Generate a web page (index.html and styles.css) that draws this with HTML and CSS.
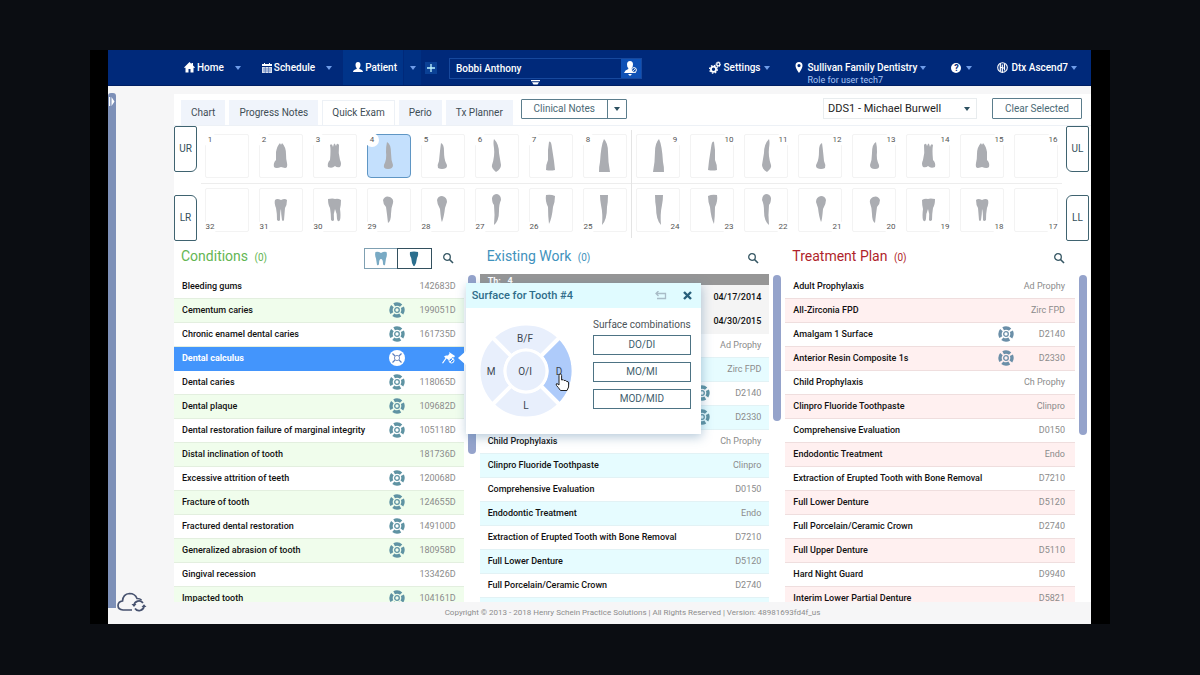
FILE: index.html
```html
<!DOCTYPE html>
<html lang="en">
<head>
<meta charset="utf-8">
<title>Quick Exam - Bobbi Anthony</title>
<link rel="stylesheet" href="styles.css">
</head>
<body>
<svg class="defs" aria-hidden="true">
  <symbol id="surf" viewBox="0 0 16 16"><circle cx="8" cy="8" r="6" fill="none" stroke="currentColor" stroke-width="3.4" stroke-dasharray="7.4 2.025" stroke-dashoffset="3.7"/><circle cx="8" cy="8" r="2.300" fill="none" stroke="currentColor" stroke-width="1.300"/></symbol>
  <symbol id="search" viewBox="0 0 12 12"><circle cx="5" cy="5" r="3.3" fill="none" stroke="currentColor" stroke-width="1.3"/><path d="M7.5 7.5L11 11" stroke="currentColor" stroke-width="1.6"/></symbol>
  <symbol id="u2" viewBox="0 0 44 44"><path d="M15 33Q14 29 17 26L17 18Q18 12 21 9Q22 12 23 9Q27 13 27 20Q27 26 28 29Q29 34 26 34L22 33Q17 35 15 33Z"/></symbol>
  <symbol id="u3" viewBox="0 0 44 44"><path d="M15 33Q14 29 17 26Q18 16 17 11Q19 9 20 13Q21 8 22 10L23 12Q24 8 26 11Q25 19 27 26Q29 30 27 33Q24 34 22 32Q19 35 15 33Z"/></symbol>
  <symbol id="u4" viewBox="0 0 44 44"><path d="M20 8Q24 10 24 19Q24 26 26 31Q26 35 21 35Q16 35 17 31Q20 25 19 18Q19 12 20 8Z"/></symbol>
  <symbol id="u5" viewBox="0 0 44 44"><path d="M20 9Q23 10 23 17Q23 25 25 29Q27 32 25 34Q21 36 17 34Q16 31 18 27Q19 16 20 9Z"/></symbol>
  <symbol id="u6" viewBox="0 0 44 44"><path d="M19 5Q24 10 24 19L26 31Q26 35 21 38Q16 34 17 31Q20 22 19 14Q18 8 19 5Z"/></symbol>
  <symbol id="u7" viewBox="0 0 44 44"><path d="M20 8Q22 6 23 14L25 27L26 36Q21 37 17 36Q17 30 19 26L19 16Z"/></symbol>
  <symbol id="u8" viewBox="0 0 44 44"><path d="M21 5Q25 9 25 18Q25 27 27 38H16Q16 32 17 28Q18 11 21 5Z"/></symbol>
  <symbol id="l31" viewBox="0 0 44 44"><path d="M16 12Q18 10 22 12Q26 10 28 12Q28 17 26 20L25 32Q24 34 23 32Q22 26 22 21Q21 23 21 32Q20 34 18 32Q18 25 17 20Q15 15 16 12Z"/></symbol>
  <symbol id="l30" viewBox="0 0 44 44"><path d="M15 11Q20 10 22 11Q25 10 28 12Q28 17 27 21Q28 28 27 32Q25 35 24 31Q24 25 22 21Q20 26 21 32Q20 34 18 32Q18 26 17 20Q15 17 15 11Z"/></symbol>
  <symbol id="l29" viewBox="0 0 44 44"><path d="M16 12Q18 7 23 9Q27 11 26 15Q24 20 24 26Q24 33 21 35Q20 26 19 19Q16 16 16 12Z"/></symbol>
  <symbol id="l28" viewBox="0 0 44 44"><path d="M16 12Q17 8 21 8Q26 9 26 14L24 20Q23 29 21 34Q20 33 19 21Q16 16 16 12Z"/></symbol>
  <symbol id="l27" viewBox="0 0 44 44"><path d="M17 10Q18 6 22 6Q26 7 26 12Q24 16 24 23Q24 33 19 37Q20 26 19 17Q17 15 17 10Z"/></symbol>
  <symbol id="l26" viewBox="0 0 44 44"><path d="M17 7Q22 6 26 8Q26 14 24 19Q23 30 20 36Q19 28 19 19Q16 13 17 7Z"/></symbol>
  <symbol id="l25" viewBox="0 0 44 44"><path d="M17 7H25Q25 14 24 19Q24 32 19 37Q20 26 18 17Q17 12 17 7Z"/></symbol>
</svg>

<div class="app">
  <header class="topbar">
    <nav class="menu">
      <a class="item home" href="#"><svg width="11" height="11" viewBox="0 0 11 11"><path fill="currentColor" d="M5.500 0L7.500 2V1H9V3.500L11 5.500L10 6L9.500 5.500V10.500H6.500V7H4.500V10.500H1.500V5.500L1 6L0 5.500Z"/></svg>Home<i class="caret"></i></a>
      <a class="item schedule" href="#"><svg width="10" height="10" viewBox="0 0 10 10"><path fill="currentColor" d="M0 1H2V0H3V1H7V0H8V1H10V3H0Z"/><path fill="currentColor" opacity=".85" d="M0 4H10V10H0Z"/><path stroke="#4a70b5" stroke-width=".7" d="M1 6H9M1 8H9M3.300 4V10M6.600 4V10"/></svg>Schedule<i class="caret"></i></a>
      <a class="item patient" href="#"><svg width="10" height="11" viewBox="0 0 10 11"><path fill="currentColor" d="M5 0Q7.500 0 7.500 3Q7.500 5 6.300 6.200V7Q10 8 10 10H0Q0 8 3.700 7V6.200Q2.500 5 2.500 3Q2.500 0 5 0Z"/></svg>Patient</a>
      <button class="patient-more" aria-label="Patient menu"><i class="caret"></i></button>
      <button class="add" aria-label="Add"><svg width="8" height="8" viewBox="0 0 8 8"><path d="M4 0V8M0 4H8" stroke="currentColor" stroke-width="1.300"/></svg></button>
    </nav>
    <form class="finder">
      <input type="text" value="Bobbi Anthony" aria-label="Patient name">
      <button type="button" aria-label="Find patient"><svg width="16" height="17" viewBox="0 0 16 17"><path fill="currentColor" d="M7 1Q10 1 10 4.500Q10 7 8.700 8V9Q12 10 13 13H1Q2 10 5.300 9V8Q4 7 4 4.500Q4 1 7 1ZM5 14H9L7 16Z"/><circle cx="11" cy="10" r="2.400" fill="#0b4aa8" stroke="currentColor"/><path d="M9.500 11.500L12.500 8.500" stroke="currentColor" stroke-width=".8"/></svg></button>
      <svg class="handle" width="9" height="5" viewBox="0 0 9 5"><path fill="#fff" d="M0 0H9V1.200H0ZM1 2.200H8L6.500 4.500H2.500Z"/></svg>
    </form>
    <nav class="menu tools">
      <a class="item settings" href="#"><svg width="12" height="13" viewBox="0 0 12 13"><circle cx="4.500" cy="8.300" r="2.600" fill="none" stroke="currentColor" stroke-width="1.800"/><circle cx="4.500" cy="8.300" r="3.900" fill="none" stroke="currentColor" stroke-width="1.300" stroke-dasharray="1.500 1.560"/><circle cx="9.300" cy="3.300" r="1.600" fill="none" stroke="currentColor" stroke-width="1.200"/><circle cx="9.300" cy="3.300" r="2.400" fill="none" stroke="currentColor" stroke-dasharray="1 .9"/></svg>Settings<i class="caret"></i></a>
      <a class="item office" href="#"><svg width="8" height="11" viewBox="0 0 8 11"><path fill="currentColor" fill-rule="evenodd" d="M4 0Q7.500 0 7.500 3.700Q7.500 6 4 11Q.5 6 .5 3.700Q.5 0 4 0ZM4 2A1.600 1.600 0 1 0 4 5.200A1.600 1.600 0 1 0 4 2Z"/></svg><span>Sullivan Family Dentistry<small>Role for user tech7</small></span><i class="caret"></i></a>
      <a class="item help" href="#" aria-label="Help"><b class="round">?</b><i class="caret"></i></a>
      <a class="item user" href="#"><svg width="11" height="11" viewBox="0 0 11 11"><circle cx="5.500" cy="5.500" r="4.800" fill="none" stroke="currentColor" stroke-width="1.100"/><path d="M3.300 1V9.500M5.300 2.500V11M7.500 1.500V8.500M3 5.500H5.500M5.500 6H8" fill="none" stroke="currentColor" stroke-width="1.200"/></svg>Dtx Ascend7<i class="caret"></i></a>
    </nav>
  </header>

  <div class="workspace">
    <aside class="rail">
      <button class="rail-bar" aria-label="Expand side panel"><svg width="6" height="9" viewBox="0 0 6 9"><path fill="#fff" d="M0 0H1.200V9H0ZM2.500 0L5.500 4.500L2.500 9Z"/></svg></button>
      <svg class="cloud" width="30" height="20" viewBox="0 0 30 20" fill="none" stroke="#47526f" stroke-width="1.700"><path d="M15 18H6Q1 17.500 1 13.500Q1.200 9.500 5.500 9Q6 2 12.500 1.500Q18 1.500 20 6.500Q23 6.500 24.500 8"/><path d="M17 13.500A5 5 0 0 1 26 11M27 14.500A5 5 0 0 1 18 16.500"/><path d="M14.500 12L17 15L19.500 12ZM24.500 15L27 12.200L29.500 15Z" fill="#47526f" stroke="none"/></svg>
    </aside>

    <div class="content">
      <main class="board">
        <div class="toolbar">
          <div class="tabs" role="tablist">
            <button class="tab" role="tab">Chart</button>
            <button class="tab" role="tab">Progress Notes</button>
            <button class="tab active" role="tab" aria-selected="true">Quick Exam</button>
            <button class="tab" role="tab">Perio</button>
            <button class="tab" role="tab">Tx Planner</button>
          </div>
          <div class="split"><button>Clinical Notes</button><button aria-label="More notes"><i class="caret dark"></i></button></div>
          <div class="provider"><select aria-label="Provider"><option>DDS1 - Michael Burwell</option></select><i class="caret dark"></i></div>
          <button class="clear">Clear Selected</button>
        </div>

        <section class="chart" aria-label="Teeth">
          <div class="side left"><button>UR</button><button>LR</button></div>
          <div class="arch right-half">
            <div class="teeth upper">
              <button class="tooth"><span>1</span></button>
              <button class="tooth"><svg><use href="#u2"/></svg><span>2</span></button>
              <button class="tooth"><svg><use href="#u3"/></svg><span>3</span></button>
              <button class="tooth on"><svg><use href="#u4"/></svg><span>4</span></button>
              <button class="tooth"><svg><use href="#u5"/></svg><span>5</span></button>
              <button class="tooth"><svg><use href="#u6"/></svg><span>6</span></button>
              <button class="tooth"><svg><use href="#u7"/></svg><span>7</span></button>
              <button class="tooth"><svg><use href="#u8"/></svg><span>8</span></button>
            </div>
            <div class="teeth lower">
              <button class="tooth"><span>32</span></button>
              <button class="tooth"><svg><use href="#l31"/></svg><span>31</span></button>
              <button class="tooth"><svg><use href="#l30"/></svg><span>30</span></button>
              <button class="tooth"><svg><use href="#l29"/></svg><span>29</span></button>
              <button class="tooth"><svg><use href="#l28"/></svg><span>28</span></button>
              <button class="tooth"><svg><use href="#l27"/></svg><span>27</span></button>
              <button class="tooth"><svg><use href="#l26"/></svg><span>26</span></button>
              <button class="tooth"><svg><use href="#l25"/></svg><span>25</span></button>
            </div>
          </div>
          <div class="arch left-half">
            <div class="teeth upper">
              <button class="tooth"><svg><use href="#u8"/></svg><span>9</span></button>
              <button class="tooth"><svg><use href="#u7"/></svg><span>10</span></button>
              <button class="tooth"><svg><use href="#u6"/></svg><span>11</span></button>
              <button class="tooth"><svg><use href="#u5"/></svg><span>12</span></button>
              <button class="tooth"><svg><use href="#u4"/></svg><span>13</span></button>
              <button class="tooth"><svg><use href="#u3"/></svg><span>14</span></button>
              <button class="tooth"><svg><use href="#u2"/></svg><span>15</span></button>
              <button class="tooth"><span>16</span></button>
            </div>
            <div class="teeth lower">
              <button class="tooth"><svg><use href="#l25"/></svg><span>24</span></button>
              <button class="tooth"><svg><use href="#l26"/></svg><span>23</span></button>
              <button class="tooth"><svg><use href="#l27"/></svg><span>22</span></button>
              <button class="tooth"><svg><use href="#l28"/></svg><span>21</span></button>
              <button class="tooth"><svg><use href="#l29"/></svg><span>20</span></button>
              <button class="tooth"><svg><use href="#l30"/></svg><span>19</span></button>
              <button class="tooth"><svg><use href="#l31"/></svg><span>18</span></button>
              <button class="tooth"><span>17</span></button>
            </div>
          </div>
          <div class="side right"><button>UL</button><button>LL</button></div>
        </section>

        <div class="panels">
          <section class="panel conditions">
            <header class="panel-head">
              <h2>Conditions <small>(0)</small></h2>
              <div class="toggle">
                <button aria-label="Whole mouth"><svg width="14" height="15" viewBox="0 0 14 15"><path fill="#79aac4" d="M1.500 1Q4 0 7 2Q10 0 12.500 1Q13.500 4 12 7.500L11 14Q9.500 15 9 13Q9 8 7 8Q5 8 5 13Q4.500 15 3 14L2 7.500Q.5 4 1.500 1Z"/></svg></button>
                <button aria-label="Single tooth"><svg width="10" height="15" viewBox="0 0 10 15"><path fill="#2c6f8e" d="M1 1Q5 0 9 1Q9.500 5 8 7Q7.500 12 5.500 15H4.500Q2.500 12 2.200 7Q.5 5 1 1Z"/></svg></button>
              </div>
              <button class="find" aria-label="Search conditions"><svg width="12" height="12"><use href="#search"/></svg></button>
            </header>
            <div class="list">
              <table>
                <tr><td>Bleeding gums</td><td></td><td>142683D</td></tr>
                <tr><td>Cementum caries</td><td><svg><use href="#surf"/></svg></td><td>199051D</td></tr>
                <tr><td>Chronic enamel dental caries</td><td><svg><use href="#surf"/></svg></td><td>161735D</td></tr>
                <tr class="selected"><td>Dental calculus</td><td><svg viewBox="0 0 16 16"><circle cx="8" cy="8" r="8" fill="#fff"/><circle cx="8" cy="8" r="2.600" fill="none" stroke="#7d94c4"/><path d="M3.500 3.500L6 6M12.500 3.500L10 6M3.500 12.500L6 10M12.500 12.500L10 10" stroke="#5b7fc0" stroke-width="1.200"/></svg></td><td><svg class="pin" viewBox="0 0 14 14"><path fill="#fff" d="M7 1L13 5L12 6.500L10.500 6L9 8L8 10L4.500 7.500L1 12.500L0 12L3.500 7L2 5.500L4 4.500L6 4.500L7.500 2.500Z"/><circle cx="9.500" cy="9.500" r="2.500" fill="#4395fc" stroke="#fff"/><path d="M8 11L11 8" stroke="#fff"/></svg></td></tr>
                <tr><td>Dental caries</td><td><svg><use href="#surf"/></svg></td><td>118065D</td></tr>
                <tr><td>Dental plaque</td><td><svg><use href="#surf"/></svg></td><td>109682D</td></tr>
                <tr><td>Dental restoration failure of marginal integrity</td><td><svg><use href="#surf"/></svg></td><td>105118D</td></tr>
                <tr><td>Distal inclination of tooth</td><td></td><td>181736D</td></tr>
                <tr><td>Excessive attrition of teeth</td><td><svg><use href="#surf"/></svg></td><td>120068D</td></tr>
                <tr><td>Fracture of tooth</td><td><svg><use href="#surf"/></svg></td><td>124655D</td></tr>
                <tr><td>Fractured dental restoration</td><td><svg><use href="#surf"/></svg></td><td>149100D</td></tr>
                <tr><td>Generalized abrasion of tooth</td><td><svg><use href="#surf"/></svg></td><td>180958D</td></tr>
                <tr><td>Gingival recession</td><td></td><td>133426D</td></tr>
                <tr><td>Impacted tooth</td><td><svg><use href="#surf"/></svg></td><td>104161D</td></tr>
              </table>
            </div>
            <div class="track"><i class="thumb tall"></i></div>
          </section>

          <section class="panel work">
            <header class="panel-head">
              <h2>Existing Work <small>(0)</small></h2>
              <button class="find" aria-label="Search existing work"><svg width="12" height="12"><use href="#search"/></svg></button>
            </header>
            <div class="list">
              <div class="group">Th: &nbsp; 4</div>
              <table>
                <tr class="dated"><td></td><td></td><td>04/17/2014</td></tr>
                <tr class="dated"><td></td><td></td><td>04/30/2015</td></tr>
                <tr><td></td><td></td><td>Ad Prophy</td></tr>
                <tr><td></td><td></td><td>Zirc FPD</td></tr>
                <tr><td></td><td><svg><use href="#surf"/></svg></td><td>D2140</td></tr>
                <tr><td></td><td><svg><use href="#surf"/></svg></td><td>D2330</td></tr>
                <tr><td>Child Prophylaxis</td><td></td><td>Ch Prophy</td></tr>
                <tr><td>Clinpro Fluoride Toothpaste</td><td></td><td>Clinpro</td></tr>
                <tr><td>Comprehensive Evaluation</td><td></td><td>D0150</td></tr>
                <tr><td>Endodontic Treatment</td><td></td><td>Endo</td></tr>
                <tr><td>Extraction of Erupted Tooth with Bone Removal</td><td></td><td>D7210</td></tr>
                <tr><td>Full Lower Denture</td><td></td><td>D5120</td></tr>
                <tr><td>Full Porcelain/Ceramic Crown</td><td></td><td>D2740</td></tr>
                <tr><td></td><td></td><td></td></tr>
              </table>
            </div>
            <div class="track"><i class="thumb short"></i></div>

            <div class="popup" role="dialog" aria-label="Surface for Tooth #4">
              <header>
                <h3>Surface for Tooth #4</h3>
                <button aria-label="Undo"><svg width="12" height="9" viewBox="0 0 12 9"><path d="M1 2.500H10.500V7.500H2M3.500 0L1 2.500L3.500 5" fill="none" stroke="#a9bcc7" stroke-width="1.300"/></svg></button>
                <button aria-label="Close"><svg width="9" height="9" viewBox="0 0 9 9"><path d="M1 1L8 8M8 1L1 8" stroke="#285f7b" stroke-width="2.400"/></svg></button>
              </header>
              <div class="popup-body">
                <svg class="wheel" width="92" height="92" viewBox="0 0 92 92">
                  <circle cx="46" cy="46" r="34" fill="none" stroke="#e8effc" stroke-width="23"/>
                  <path d="M62 30L78.200 13.800A45.500 45.500 0 0 1 78.200 78.200L62 62A22.500 22.500 0 0 0 62 30Z" fill="#aecbfa"/>
                  <path d="M10 10L82 82M82 10L10 82" stroke="#fff" stroke-width="4"/>
                  <circle cx="46" cy="46" r="22.500" fill="#fff"/>
                  <circle cx="46" cy="46" r="19.500" fill="#e8effc"/>
                  <text x="45" y="17">B/F</text><text x="11" y="50">M</text><text x="45" y="50">O/I</text><text x="79" y="50">D</text><text x="46" y="84">L</text>
                  <path d="M79 60V50.500Q79.100 49 80.300 49Q81.500 49 81.600 50.500V55Q83.500 54 84 55.500Q86 55 86.300 56.300Q88.500 56 88.600 58V62L87 65.500H80.500Q78 62 76.500 60.500Q75.500 58.500 77 58.500Z" fill="#fff" stroke="#222" stroke-width="1"/>
                </svg>
                <div class="combos">
                  <p>Surface combinations</p>
                  <button>DO/DI</button>
                  <button>MO/MI</button>
                  <button>MOD/MID</button>
                </div>
              </div>
            </div>
          </section>

          <section class="panel plan">
            <header class="panel-head">
              <h2>Treatment Plan <small>(0)</small></h2>
              <button class="find" aria-label="Search treatment plan"><svg width="12" height="12"><use href="#search"/></svg></button>
            </header>
            <div class="list">
              <table>
                <tr><td>Adult Prophylaxis</td><td></td><td>Ad Prophy</td></tr>
                <tr><td>All-Zirconia FPD</td><td></td><td>Zirc FPD</td></tr>
                <tr><td>Amalgam 1 Surface</td><td><svg><use href="#surf"/></svg></td><td>D2140</td></tr>
                <tr><td>Anterior Resin Composite 1s</td><td><svg><use href="#surf"/></svg></td><td>D2330</td></tr>
                <tr><td>Child Prophylaxis</td><td></td><td>Ch Prophy</td></tr>
                <tr><td>Clinpro Fluoride Toothpaste</td><td></td><td>Clinpro</td></tr>
                <tr><td>Comprehensive Evaluation</td><td></td><td>D0150</td></tr>
                <tr><td>Endodontic Treatment</td><td></td><td>Endo</td></tr>
                <tr><td>Extraction of Erupted Tooth with Bone Removal</td><td></td><td>D7210</td></tr>
                <tr><td>Full Lower Denture</td><td></td><td>D5120</td></tr>
                <tr><td>Full Porcelain/Ceramic Crown</td><td></td><td>D2740</td></tr>
                <tr><td>Full Upper Denture</td><td></td><td>D5110</td></tr>
                <tr><td>Hard Night Guard</td><td></td><td>D9940</td></tr>
                <tr><td>Interim Lower Partial Denture</td><td></td><td>D5821</td></tr>
              </table>
            </div>
            <div class="track"><i class="thumb mid"></i></div>
          </section>
        </div>
      </main>
      <footer class="legal">Copyright © 2013 - 2018 Henry Schein Practice Solutions | All Rights Reserved | Version: 48981693fd4f_us</footer>
    </div>
  </div>
</div>
</body>
</html>
```
FILE: styles.css
```css
* { box-sizing: border-box; }

body {
  margin: 0;
  height: 100vh;
  padding: 50px 90px 51px;
  display: flex;
  background: #0b0d12;
  font: 10px/12px Roboto, "Liberation Sans", sans-serif;
  color: #111;
}

button, input, select { font: inherit; color: inherit; margin: 0; padding: 0; border: 0; background: none; }
button { display: flex; align-items: center; justify-content: center; }
a { color: inherit; text-decoration: none; }
h2, h3, p { margin: 0; }
.defs { position: absolute; width: 0; height: 0; }

.app {
  flex: 1;
  min-width: 0;
  display: flex;
  flex-direction: column;
  border: solid #000;
  border-width: 0 19px 0 18px;
  background: #f6f6f7;
}

/* top bar */
.topbar {
  height: 36px;
  display: flex;
  align-items: stretch;
  background: #00297a;
  border-bottom: 1px solid #001f63;
  color: #fff;
  font-weight: 500;
  padding: 0 14px 0 76px;
}
.menu { display: flex; align-items: stretch; }
.item { display: flex; align-items: center; gap: 2px; white-space: nowrap; }
.caret {
  width: 0;
  height: 0;
  border: 3px solid transparent;
  border-top: 4px solid #6f9ce8;
  border-bottom: 0;
}
.caret.dark { border-top-color: #2d5060; }
.home .caret, .schedule .caret { margin-left: 9px; }
.schedule { margin-left: 21px; }
.patient { margin-left: 11px; padding: 0 6px 0 10px; background: #003489; }
.patient-more { width: 17px; margin-left: 1px; background: #003083; }
.add { align-self: center; width: 12px; height: 12px; margin-left: 4px; background: #0b4196; color: #bff5ff; }
.finder {
  position: relative;
  display: flex;
  align-self: center;
  width: 193px;
  height: 21px;
  margin: 2px 0 0 12px;
  border: 1px solid #17489d;
}
.finder input { flex: 1; min-width: 0; padding-left: 6px; }
.finder button { width: 20px; background: #0f51b5; }
.handle { position: absolute; left: 81px; top: 21px; }
.tools { flex: 1; justify-content: flex-end; gap: 25px; }
.tools .item { gap: 3px; }
.office svg { margin-right: 2px; }
.office span { position: relative; }
.office small {
  position: absolute;
  left: 0;
  top: 12px;
  font-size: 9px;
  font-weight: 400;
  color: #a9c6f5;
}
.round {
  width: 10px;
  height: 10px;
  margin-right: 2px;
  border-radius: 50%;
  background: #fff;
  color: #00297a;
  font-size: 9px;
  line-height: 10px;
  text-align: center;
}

/* frame */
.workspace { flex: 1; min-height: 0; display: flex; }
.rail { width: 66px; display: flex; align-items: flex-end; padding-top: 7px; }
.rail-bar {
  width: 8px;
  align-self: stretch;
  align-items: flex-start;
  margin-bottom: 16px;
  padding-top: 4px;
  background: #7d90b8;
  border-radius: 3px 3px 0 0;
}
.cloud { margin: 0 0 12px 1px; }
.content { flex: 1; min-width: 0; display: flex; flex-direction: column; padding-top: 8px; }
.board { flex: 1; min-height: 0; display: flex; flex-direction: column; background: #fff; }
.legal { height: 22px; line-height: 22px; font-size: 8px; text-align: center; color: #8c8c8c; }

/* toolbar */
.toolbar {
  display: flex;
  align-items: flex-start;
  padding: 4px 9px 0 7px;
  border-bottom: 1px solid #edf1f6;
  color: #3f4e56;
}
.tabs { display: flex; gap: 4px; margin-top: 2px; }
.tab { height: 25px; padding: 0 10px; background: #f0f4fb; }
.tab.active { background: #fff; border: 1px solid #edf1f6; border-bottom: 0; padding: 0 9px; }
.split { display: flex; margin: 1px 0 0 8px; border: 1px solid #5b7d8c; border-radius: 1px; height: 20px; color: #4b6a76; }
.split button:first-child { width: 86px; border-right: 1px solid #5b7d8c; }
.split button:last-child { width: 18px; }
.provider { margin-left: auto; width: 154px; height: 21px; border: 1px solid #e8ecee; display: flex; align-items: center; padding-right: 6px; }
.provider select { flex: 1; appearance: none; padding-left: 4px; color: #222; font-size: 11px; }
.clear { margin-left: 15px; width: 90px; height: 21px; border: 1px solid #5b7d8c; border-radius: 1px; color: #4b6a76; }

/* tooth chart */
.chart { display: flex; padding-right: 2px; }
.side { width: 23px; display: flex; flex-direction: column; justify-content: space-between; }
.side button { height: 46px; border: 1px solid #3f6370; color: #34505c; }
.side.left button { border-radius: 2px 2px 6px 2px; }
.side.left button + button { border-radius: 2px 6px 2px 2px; }
.side.right button { border-radius: 2px 2px 2px 6px; }
.side.right button + button { border-radius: 6px 2px 2px 2px; }
.arch { flex: 1; margin: 4px 0 3px; }
.right-half { padding-left: 4px; border-right: 1px solid #e4e4e4; }
.left-half { padding-right: 4px; }
.teeth { display: grid; grid-template-columns: repeat(8, minmax(0, 1fr)); gap: 10px; padding: 4px; }
.upper { padding-bottom: 5px; border-bottom: 1px solid #ededed; }
.lower { padding-bottom: 6px; }
.tooth { position: relative; height: 44px; border: 1px solid #f3f3f3; border-radius: 2px; }
.tooth svg { width: 44px; height: 44px; flex: none; fill: #abadb2; }
.left-half .tooth svg { transform: scaleX(-1); }
.tooth.on { background: #c4e0fd; border-color: #5f96c4; border-radius: 4px; }
.tooth span {
  position: absolute;
  width: 14px;
  height: 14px;
  left: -3px;
  top: -2px;
  border-radius: 50%;
  background: #fff;
  font-size: 8px;
  line-height: 14px;
  text-align: center;
  color: #555;
}
.lower .tooth span { top: auto; bottom: -3px; }
.left-half .tooth span { left: auto; right: -3px; }

/* lists */
.panels { flex: 1; min-height: 0; display: grid; grid-template-columns: repeat(3, 1fr); grid-template-rows: 100%; }
.panel {
  position: relative;
  min-height: 0;
  display: grid;
  grid-template-columns: 1fr 8px;
  grid-template-rows: 33px 1fr;
  column-gap: 4px;
  padding-right: 4px;
}
.panel-head { display: flex; align-items: center; padding: 0 10px 2px 7px; }
.panel-head h2 { flex: 1; font-size: 14px; line-height: 18px; font-weight: 400; }
.panel-head small { font-size: 10px; margin-left: 3px; }
.conditions h2 { color: #63b652; }
.work h2 { color: #3f92bd; }
.plan h2 { color: #b01f2b; }
.find { color: #355663; margin-top: 3px; }
.toggle { display: flex; width: 68px; height: 21px; margin: 3px 10px 0 0; border: 1px solid #7fa0b2; }
.toggle button { flex: 1; }
.toggle button + button { outline: 1px solid #33505e; }
.list { grid-column: 1; grid-row: 2; min-height: 0; overflow: hidden; font-size: 9px; line-height: 10px; }
.track { grid-column: 2; grid-row: 2; padding-top: 1px; }
.thumb { display: block; border-radius: 4px; background: #95a3cb; }
.tall { height: 179px; }
.short { height: 146px; }
.mid { height: 160px; }

table { width: 100%; border-collapse: collapse; table-layout: fixed; }
tr { height: 24px; }
td { padding: 0; border-bottom: 1px solid #ececec; white-space: nowrap; font-weight: 500; }
td:first-child { padding-left: 8px; }
td:nth-child(2) { width: 16px; }
td:last-child { width: 59px; padding-right: 8px; text-align: right; color: #8b8b8b; font-weight: 400; }
td svg { display: block; width: 16px; height: 16px; color: #5f93a3; }
.plan td svg { color: #6b8fa8; }
.plan td:last-child { width: 61px; padding-right: 10px; }
.conditions tr:nth-child(even) { background: #f0fdec; }
.conditions td { border-color: #e3efdf; }
.work tr:nth-child(even) { background: #e6fcff; }
.work td { border-color: #e2f2f5; }
.plan tr:nth-child(even) { background: #fff0f0; }
.plan td { border-color: #efdede; }
.work tr.dated { background: #f4f4f4; }
.work tr.dated td { color: #111; border-color: #f4f4f4; font-weight: 500; }
.conditions tr.selected { background: #4395fc; color: #fff; }
.conditions tr.selected td { border-color: #4395fc; font-weight: 700; }
td svg.pin { width: 14px; height: 14px; margin-left: auto; }
.group { height: 11px; padding-left: 8px; line-height: 15px; background: #969696; color: #fff; font-weight: 700; }

/* surface picker */
.popup {
  position: absolute;
  left: -14px;
  top: 42px;
  width: 235px;
  background: #fff;
  box-shadow: 1px 3px 10px rgba(70, 120, 160, .4);
}
.popup::before {
  content: "";
  position: absolute;
  left: -8px;
  top: 68px;
  border: 7px solid transparent;
  border-left: 0;
  border-right: 8px solid #fff;
}
.popup header { display: flex; align-items: center; gap: 16px; height: 25px; padding: 0 9px 0 6px; background: #e0fbff; }
.popup h3 { flex: 1; font-size: 11px; font-weight: 500; color: #2f6d8a; }
.popup-body { display: flex; justify-content: space-between; padding: 11px 10px 17px 14px; }
.wheel { margin-top: 6px; }
.wheel text { font-size: 10px; fill: #3c4650; text-anchor: middle; }
.combos { display: flex; flex-direction: column; gap: 7px; }
.combos p { margin-bottom: -3px; color: #4b5358; }
.combos button { height: 20px; border: 1px solid #4d7384; color: #3f606e; }
```
